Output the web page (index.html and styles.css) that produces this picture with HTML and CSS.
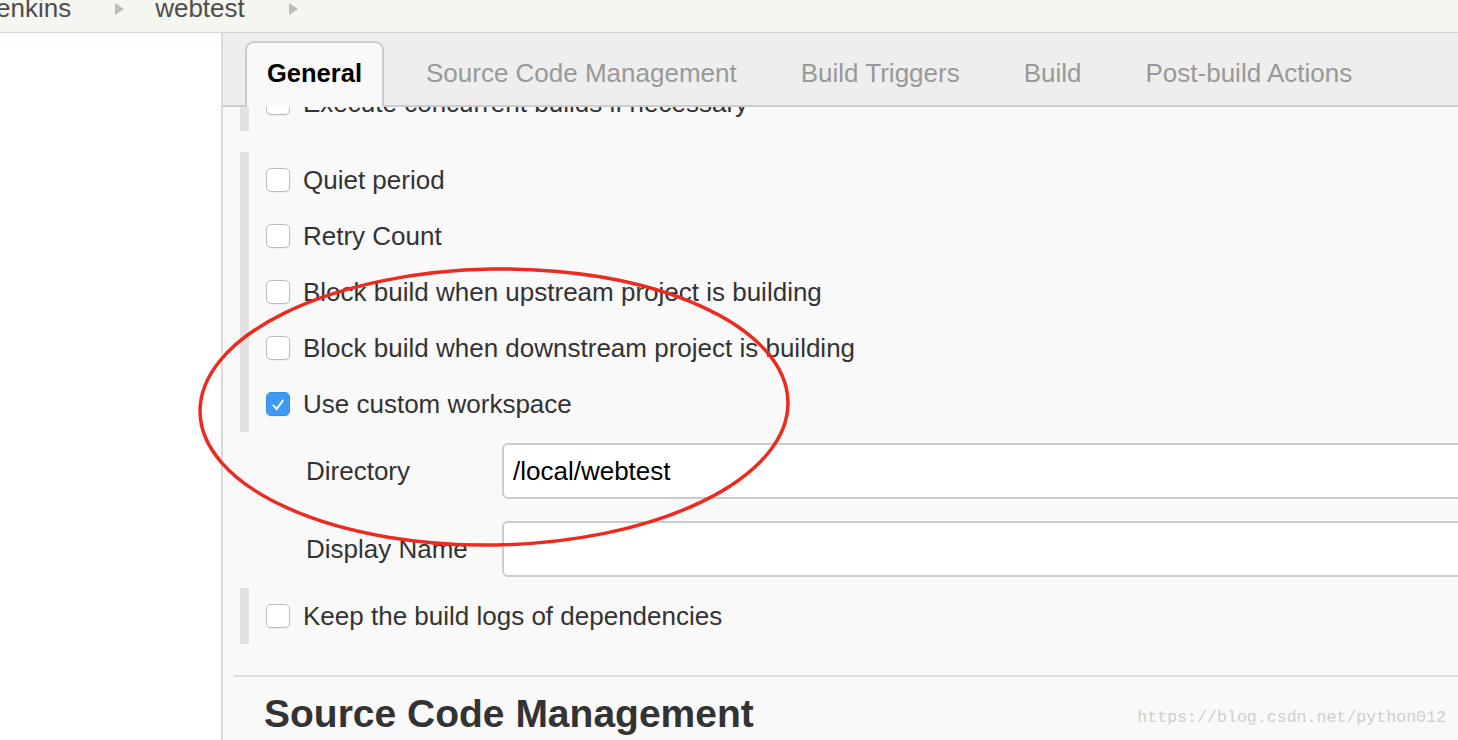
FILE: index.html
```html
<!DOCTYPE html>
<html lang="en">
<head>
<meta charset="utf-8">
<title>webtest Config [Jenkins]</title>
<link rel="stylesheet" href="styles.css">
</head>
<body>
<div class="page">
  <header class="breadcrumb">
    <span class="crumb crumb-first">Jenkins</span><span class="crumb-arrow"></span>
    <span class="crumb">webtest</span><span class="crumb-arrow"></span>
  </header>
  <div class="layout">
    <aside class="sidebar"></aside>
    <main class="main">
      <nav class="tabs">
        <div class="tab tab-active">General</div>
        <div class="tab">Source Code Management</div>
        <div class="tab">Build Triggers</div>
        <div class="tab">Build</div>
        <div class="tab">Post-build Actions</div>
      </nav>
      <div class="content">
        <div class="group group-scrolled">
          <div class="row"><span class="checkbox"></span><span class="label">Execute concurrent builds if necessary</span></div>
        </div>
        <div class="group group-advanced">
          <div class="row"><span class="checkbox"></span><span class="label">Quiet period</span></div>
          <div class="row"><span class="checkbox"></span><span class="label">Retry Count</span></div>
          <div class="row"><span class="checkbox"></span><span class="label">Block build when upstream project is building</span></div>
          <div class="row"><span class="checkbox"></span><span class="label">Block build when downstream project is building</span></div>
          <div class="row"><span class="checkbox checkbox-checked"><svg viewBox="0 0 24 24" width="24" height="24"><path d="M7 12.5 L10.5 16.5 L17 7.5" fill="none" stroke="#fff" stroke-width="2.2" stroke-linecap="round" stroke-linejoin="round"/></svg></span><span class="label">Use custom workspace</span></div>
        </div>
        <div class="field field-first"><span class="field-label">Directory</span><div class="input">/local/webtest</div></div>
        <div class="field field-second"><span class="field-label">Display Name</span><div class="input"></div></div>
        <div class="group group-logs">
          <div class="row"><span class="checkbox"></span><span class="label">Keep the build logs of dependencies</span></div>
        </div>
        <hr class="divider">
        <h2 class="section-title">Source Code Management</h2>
      </div>
    </main>
  </div>
  <svg class="annotation" viewBox="0 0 1458 740" width="1458" height="740">
    <ellipse cx="494" cy="407" rx="294" ry="138" transform="rotate(-1 494 407)" fill="none" stroke="#ec2a1f" stroke-width="3.5"/>
  </svg>
  <div class="watermark">https://blog.csdn.net/python012</div>
</div>
</body>
</html>
```
FILE: styles.css
```css
html, body {
  margin: 0;
  padding: 0;
}
body {
  font-family: "Liberation Sans", Arial, Helvetica, sans-serif;
  background: #f9f9f9;
  overflow: hidden;
}
.page {
  position: relative;
  width: 1458px;
  height: 740px;
  overflow: hidden;
  display: flex;
  flex-direction: column;
}

/* breadcrumb */
.breadcrumb {
  flex: none;
  height: 32px;
  background: #f4f6ef;
  border-bottom: 1px solid #d6d8d0;
  display: flex;
  align-items: flex-start;
  overflow: hidden;
}
.crumb {
  font-size: 26px;
  line-height: 26px;
  margin-top: -5px;
  color: #4d4d4d;
  margin-right: 44px;
}
.crumb-first {
  margin-left: -17px;
}
.crumb-arrow {
  width: 0;
  height: 0;
  margin-top: 3px;
  border-left: 9px solid #bcbcbc;
  border-top: 6.5px solid transparent;
  border-bottom: 6.5px solid transparent;
  margin-right: 31px;
}

.layout {
  flex: 1;
  display: flex;
  min-height: 0;
}
.sidebar {
  flex: none;
  width: 221px;
  background: #fff;
  border-right: 2px solid #dadada;
}
.main {
  flex: 1;
  min-width: 0;
  display: flex;
  flex-direction: column;
  overflow: hidden;
}

/* tabs */
.tabs {
  flex: none;
  display: flex;
  align-items: stretch;
  gap: 20px;
  height: 64px;
  padding: 8px 0 0 22px;
  background: #eeeeee;
  border-bottom: 2px solid #cccccc;
  position: relative;
  z-index: 1;
}
.tab {
  display: flex;
  align-items: center;
  padding: 0 20px 2px;
  font-size: 26px;
  color: #999999;
  white-space: nowrap;
  border: 2px solid transparent;
  border-bottom: none;
}
.tab-active {
  color: #000;
  font-size: 25.5px;
  font-weight: bold;
  background: #f9f9f9;
  border-color: #cccccc;
  border-radius: 9px 9px 0 0;
  margin-bottom: -2px;
  padding-bottom: 4px;
}

/* content */
.content {
  flex: 1;
  min-height: 0;
  padding-left: 17px;
  background: #f9f9f9;
  display: flex;
  flex-direction: column;
}
.group {
  border-left: 9px solid #e2e2e2;
  padding-left: 17px;
  display: flex;
  flex-direction: column;
}
.group-scrolled {
  margin-top: -32px;
}
.group-advanced {
  margin-top: 21px;
}
.group-logs {
  margin-top: 11px;
}
.row {
  height: 56px;
  display: flex;
  align-items: center;
  gap: 13px;
}
.label {
  font-size: 26px;
  color: #333333;
  white-space: nowrap;
}
.checkbox {
  flex: none;
  width: 24px;
  height: 24px;
  box-sizing: border-box;
  border: 1px solid #bdbdbd;
  border-radius: 5px;
  background: #fff;
  box-shadow: 0 1px 1px rgba(0, 0, 0, 0.06);
  display: flex;
}
.checkbox-checked {
  background: #3f97f6;
  border-color: #3a8ee8;
}

.field {
  height: 56px;
  display: flex;
  align-items: center;
  padding-left: 66px;
}
.field-first {
  margin-top: 11px;
}
.field-second {
  margin-top: 22px;
}
.field-label {
  flex: none;
  width: 196px;
  font-size: 26px;
  color: #333333;
}
.input {
  flex: 1;
  height: 56px;
  box-sizing: border-box;
  margin-right: -30px;
  border: 2px solid #cccccc;
  border-radius: 6px;
  background: #fff;
  padding-left: 9px;
  display: flex;
  align-items: center;
  font-size: 26px;
  color: #000;
}

.divider {
  margin: 31px 0 0 -6px;
  border: none;
  height: 2px;
  background: #dddddd;
}
.section-title {
  margin: 17px 0 0 24px;
  font-size: 39px;
  line-height: 39px;
  font-weight: bold;
  color: #333333;
  white-space: nowrap;
}

/* overlays */
.annotation {
  position: absolute;
  left: 0;
  top: 0;
  pointer-events: none;
}
.watermark {
  position: absolute;
  right: 12px;
  top: 708px;
  font-family: "Liberation Mono", "Courier New", monospace;
  font-size: 16.6px;
  color: #cfcfcf;
  white-space: nowrap;
}
```
